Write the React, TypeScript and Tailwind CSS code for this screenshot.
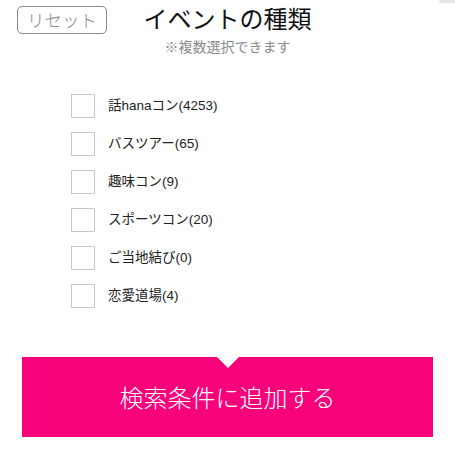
import React from "react";

const items = [
  "話hanaコン(4253)",
  "バスツアー(65)",
  "趣味コン(9)",
  "スポーツコン(20)",
  "ご当地結び(0)",
  "恋愛道場(4)",
];

export default function App() {
  return (
    <div
      className="relative w-[455px] h-[465px] bg-white overflow-hidden"
      style={{ fontFamily: '"Noto Sans CJK JP", "Noto Sans", sans-serif' }}
    >
      <div className="absolute right-0 top-0 w-[16px] h-[3px] rounded-bl-[6px] bg-[#e6e6e6]" />
      <div className="relative pt-[5px] flex flex-col items-center">
        <button className="absolute left-[17px] top-[6px] w-[90px] h-[28px] border border-[#8a8a8a] rounded-[5px] text-[17.5px] font-light leading-none text-[#888] flex items-center justify-center">
          リセット
        </button>
        <h1 className="text-[24px] leading-none text-[#111] h-[30px] pt-[1px]">イベントの種類</h1>
        <p className="text-[14px] leading-none text-[#8a8a8a] mt-[4px]">※複数選択できます</p>
      </div>
      <ul className="pl-[71px] pt-[41px] flex flex-col gap-[14px]">
        {items.map((t) => (
          <li key={t} className="flex items-center gap-[13px] h-[24px]">
            <span className="w-[24px] h-[24px] border border-[#c8c8c8] bg-white shrink-0" />
            <span
              className="text-[13.5px] text-[#222] leading-none"
              style={{ fontFamily: '"Liberation Sans", "Noto Sans CJK JP", sans-serif' }}
            >
              {t}
            </span>
          </li>
        ))}
      </ul>
      <div className="px-[22px] mt-[49px]">
        <button className="relative w-full h-[80px] bg-[#f7027b] flex items-center justify-center text-white text-[24px] font-light leading-none">
          <span className="absolute left-1/2 top-0 -translate-x-1/2 w-0 h-0 border-l-[11px] border-r-[11px] border-t-[11px] border-l-transparent border-r-transparent border-t-white" />
          検索条件に追加する
        </button>
      </div>
    </div>
  );
}
